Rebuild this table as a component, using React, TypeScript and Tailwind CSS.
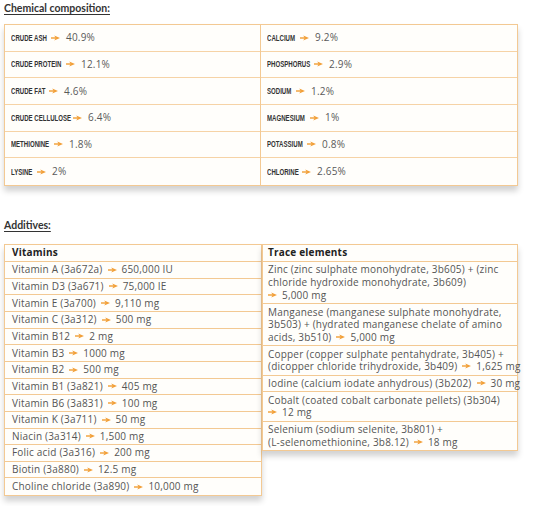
import React from "react";

const Arrow = ({ className = "mx-[5px]" }: { className?: string }) => (
  <svg className={`inline-block w-[9px] h-[6px] align-[1px] ${className}`} viewBox="0 0 10 6">
    <path d="M0 3h6" stroke="#f2a03a" strokeWidth={1.6} />
    <polygon points="3.6,0.2 10,3 3.6,5.8 5.2,3" fill="#f2a03a" />
  </svg>
);

// label, value, width the condensed label takes up
const chemLeft = [
  ["CRUDE ASH", "40.9%", "w-[36px]"],
  ["CRUDE PROTEIN", "12.1%", "w-[51px]"],
  ["CRUDE FAT", "4.6%", "w-[34px]"],
  ["CRUDE CELLULOSE", "6.4%", "w-[58px]"],
  ["METHIONINE", "1.8%", "w-[39px]"],
  ["LYSINE", "2%", "w-[22px]"],
];

const chemRight = [
  ["CALCIUM", "9.2%", "w-[29px]"],
  ["PHOSPHORUS", "2.9%", "w-[43px]"],
  ["SODIUM", "1.2%", "w-[25px]"],
  ["MAGNESIUM", "1%", "w-[39px]"],
  ["POTASSIUM", "0.8%", "w-[36px]"],
  ["CHLORINE", "2.65%", "w-[31px]"],
];

const vitamins = [
  ["Vitamin A (3a672a)", "650,000 IU"],
  ["Vitamin D3 (3a671)", "75,000 IE"],
  ["Vitamin E (3a700)", "9,110 mg"],
  ["Vitamin C (3a312)", "500 mg"],
  ["Vitamin B12", "2 mg"],
  ["Vitamin B3", "1000 mg"],
  ["Vitamin B2", "500 mg"],
  ["Vitamin B1 (3a821)", "405 mg"],
  ["Vitamin B6 (3a831)", "100 mg"],
  ["Vitamin K (3a711)", "50 mg"],
  ["Niacin (3a314)", "1,500 mg"],
  ["Folic acid (3a316)", "200 mg"],
  ["Biotin (3a880)", "12.5 mg"],
  ["Choline chloride (3a890)", "10,000 mg"],
];

// lines of text; the last line gets the arrow + value
const traces: { lines: string[]; last: string; value: string }[] = [
  {
    lines: ["Zinc (zinc sulphate monohydrate, 3b605) + (zinc", "chloride hydroxide monohydrate, 3b609)"],
    last: "",
    value: "5,000 mg",
  },
  {
    lines: ["Manganese (manganese sulphate monohydrate,", "3b503) + (hydrated manganese chelate of amino"],
    last: "acids, 3b510)",
    value: "5,000 mg",
  },
  {
    lines: ["Copper (copper sulphate pentahydrate, 3b405) +"],
    last: "(dicopper chloride trihydroxide, 3b409)",
    value: "1,625 mg",
  },
  { lines: [], last: "Iodine (calcium iodate anhydrous) (3b202)", value: "30 mg" },
  { lines: ["Cobalt (coated cobalt carbonate pellets) (3b304)"], last: "", value: "12 mg" },
  {
    lines: ["Selenium (sodium selenite, 3b801) +"],
    last: "(L-selenomethionine, 3b8.12)",
    value: "18 mg",
  },
];

function ChemCell({ label, value, w }: { label: string; value: string; w: string }) {
  return (
    <div className="h-[26.67px] flex items-center px-[6px] border-b border-[#f6d3a6] last:border-b-0">
      <span className={`${w} shrink-0 flex items-center whitespace-nowrap`}>
        <span className="inline-block origin-left scale-x-[0.64] font-['Liberation_Sans',sans-serif] font-bold text-[9.5px] leading-[10px] text-[#333]">
          {label}
        </span>
      </span>
      <Arrow className="ml-[4px] mr-[6px]" />
      <span className="font-['Open_Sans',sans-serif] text-[10px] text-[#5a5a5a] tracking-[0.2px]">{value}</span>
    </div>
  );
}

export default function App() {
  return (
    <div className="w-[533px] h-[506px] bg-white px-1 pt-[1px] font-['Lato',sans-serif] overflow-hidden">
      <h2 className="text-[10.5px] font-bold text-[#333] underline underline-offset-[2px] leading-[14px]">
        Chemical composition:
      </h2>

      {/* Chemical composition table */}
      <div className="mt-[9px] w-[514px] flex border border-[#f3c993] bg-[#fffefb] shadow-[0_5px_6px_rgba(0,0,0,0.18)]">
        <div className="w-[256px] flex flex-col border-r border-[#f3c993]">
          {chemLeft.map(([l, v, w]) => (
            <ChemCell key={l} label={l} value={v} w={w} />
          ))}
        </div>
        <div className="flex-1 flex flex-col">
          {chemRight.map(([l, v, w]) => (
            <ChemCell key={l} label={l} value={v} w={w} />
          ))}
        </div>
      </div>

      <h2 className="mt-[32px] text-[10.5px] font-bold text-[#333] underline underline-offset-[2px] leading-[14px]">
        Additives:
      </h2>

      {/* Additives */}
      <div className="mt-[12px] flex items-start font-['Open_Sans',sans-serif] text-[10px] text-[#555] tracking-[0.2px]">
        <div className="w-[258px] border border-[#f3c993] bg-[#fffefb] shadow-[0_5px_6px_rgba(0,0,0,0.18)]">
          <div className="h-[17px] flex items-center px-[7px] border-b border-[#f3c993] font-bold text-[#222]">
            Vitamins
          </div>
          {vitamins.map(([n, v]) => (
            <div
              key={n}
              className="h-[16.67px] flex items-center px-[7px] border-b border-[#f3c993] last:border-b-0 whitespace-nowrap"
            >
              {n}
              <Arrow />
              {v}
            </div>
          ))}
        </div>
        <div className="w-[256px] border border-[#f3c993] bg-[#fffefb] shadow-[0_5px_6px_rgba(0,0,0,0.18)]">
          <div className="h-[17px] flex items-center px-[5px] border-b border-[#f3c993] font-bold text-[#222]">
            Trace elements
          </div>
          {traces.map((t, i) => (
            <div
              key={i}
              className="px-[5px] py-[1.5px] leading-[12.7px] border-b border-[#f3c993] last:border-b-0 whitespace-nowrap"
            >
              {t.lines.map((l) => (
                <div key={l}>{l}</div>
              ))}
              <div>
                {t.last}
                <Arrow className={t.last ? "mx-[5px]" : "mr-[5px]"} />
                {t.value}
              </div>
            </div>
          ))}
        </div>
      </div>
    </div>
  );
}
